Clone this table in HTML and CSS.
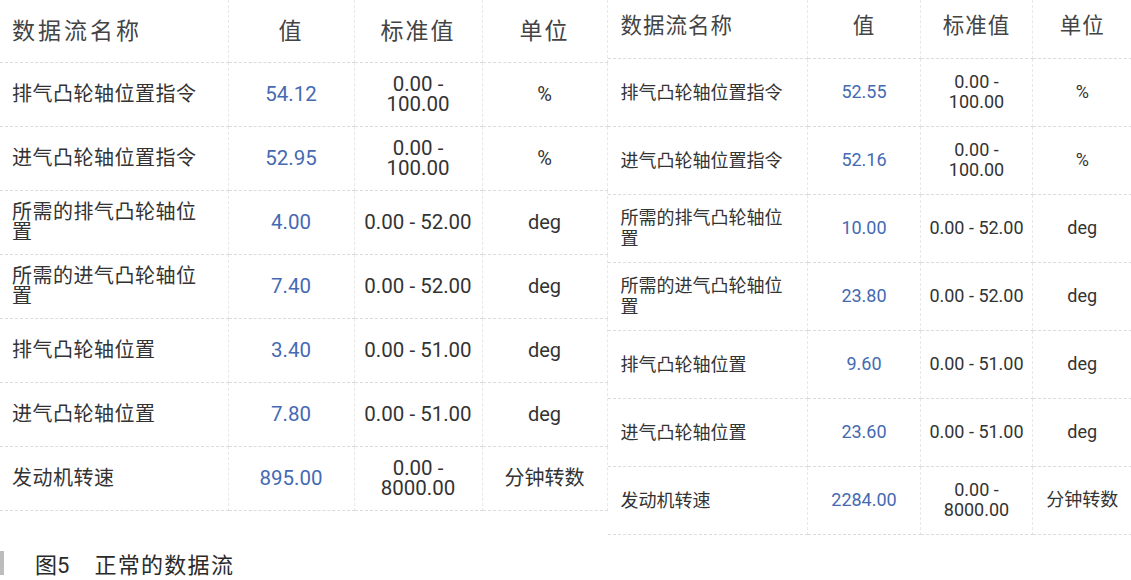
FILE: index.html
```html
<!DOCTYPE html>
<html lang="zh">
<head>
<meta charset="utf-8">
<link rel="stylesheet" href="styles.css">
</head>
<body>
<div class="figure">
  <div class="tables">
    <table class="dt dt-left">
      <colgroup><col class="c1"><col class="c2"><col class="c3"><col class="c4"></colgroup>
      <thead>
        <tr><th class="name">数据流名称</th><th>值</th><th>标准值</th><th>单位</th></tr>
      </thead>
      <tbody>
        <tr><td class="name">排气凸轮轴位置指令</td><td class="val">54.12</td><td class="rng">0.00 - 100.00</td><td class="unit">%</td></tr>
        <tr><td class="name">进气凸轮轴位置指令</td><td class="val">52.95</td><td class="rng">0.00 - 100.00</td><td class="unit">%</td></tr>
        <tr><td class="name">所需的排气凸轮轴位置</td><td class="val">4.00</td><td class="rng">0.00 - 52.00</td><td class="unit">deg</td></tr>
        <tr><td class="name">所需的进气凸轮轴位置</td><td class="val">7.40</td><td class="rng">0.00 - 52.00</td><td class="unit">deg</td></tr>
        <tr><td class="name">排气凸轮轴位置</td><td class="val">3.40</td><td class="rng">0.00 - 51.00</td><td class="unit">deg</td></tr>
        <tr><td class="name">进气凸轮轴位置</td><td class="val">7.80</td><td class="rng">0.00 - 51.00</td><td class="unit">deg</td></tr>
        <tr><td class="name">发动机转速</td><td class="val">895.00</td><td class="rng">0.00 - 8000.00</td><td class="unit">分钟转数</td></tr>
      </tbody>
    </table>
    <table class="dt dt-right">
      <colgroup><col class="c1"><col class="c2"><col class="c3"><col class="c4"></colgroup>
      <thead>
        <tr><th class="name">数据流名称</th><th>值</th><th>标准值</th><th>单位</th></tr>
      </thead>
      <tbody>
        <tr><td class="name">排气凸轮轴位置指令</td><td class="val">52.55</td><td class="rng">0.00 - 100.00</td><td class="unit">%</td></tr>
        <tr><td class="name">进气凸轮轴位置指令</td><td class="val">52.16</td><td class="rng">0.00 - 100.00</td><td class="unit">%</td></tr>
        <tr><td class="name">所需的排气凸轮轴位置</td><td class="val">10.00</td><td class="rng">0.00 - 52.00</td><td class="unit">deg</td></tr>
        <tr><td class="name">所需的进气凸轮轴位置</td><td class="val">23.80</td><td class="rng">0.00 - 52.00</td><td class="unit">deg</td></tr>
        <tr><td class="name">排气凸轮轴位置</td><td class="val">9.60</td><td class="rng">0.00 - 51.00</td><td class="unit">deg</td></tr>
        <tr><td class="name">进气凸轮轴位置</td><td class="val">23.60</td><td class="rng">0.00 - 51.00</td><td class="unit">deg</td></tr>
        <tr><td class="name">发动机转速</td><td class="val">2284.00</td><td class="rng">0.00 - 8000.00</td><td class="unit">分钟转数</td></tr>
      </tbody>
    </table>
  </div>
  <div class="caption"><span class="bar"></span><span class="cap-num">图5</span><span class="cap-text">正常的数据流</span></div>
</div>
</body>
</html>
```

FILE: styles.css
```css
html, body {
  margin: 0;
  padding: 0;
  background: #ffffff;
}

body {
  font-family: Roboto, "Noto Sans CJK SC", sans-serif;
  color: #333;
  width: 1131px;
  height: 580px;
  overflow: hidden;
}

.figure {
  display: flex;
  flex-direction: column;
}

.tables {
  display: flex;
  align-items: flex-start;
}

.dt {
  border-collapse: collapse;
  table-layout: fixed;
}

.dt th,
.dt td {
  border-bottom: 1px dashed #dcdcdc;
  border-right: 1px dashed #e8e8e8;
  text-align: center;
  vertical-align: middle;
  padding: 0 8px;
  box-sizing: border-box;
}

.dt th {
  font-weight: 400;
  color: #444;
}

.dt .name {
  text-align: left;
}

.dt .val {
  color: #456ab2;
}

/* left table */
.dt-left {
  width: 607px;
}
.dt-left .c1 { width: 228px; }
.dt-left .c2 { width: 126px; }
.dt-left .c3 { width: 128px; }
.dt-left .c4 { width: 125px; }

.dt-left th {
  height: 62px;
  font-size: 23px;
  letter-spacing: 2px;
  padding-bottom: 4px;
}
.dt-left th.name {
  padding-left: 12px;
  letter-spacing: 3px;
}
.dt-left tbody tr {
  height: 64px;
}
.dt-left td {
  font-size: 20.5px;
  line-height: 20px;
}
.dt-left td.val {
  font-size: 20.5px;
}
.dt-left td.name {
  font-size: 20px;
  letter-spacing: 0.5px;
  padding: 0 16px 0 12px;
}
.dt-left td.unit {
  font-size: 20px;
}

/* right table */
.dt-right {
  width: 524px;
}
.dt-right .c1 { width: 200px; }
.dt-right .c2 { width: 113px; }
.dt-right .c3 { width: 112px; }
.dt-right .c4 { width: 99px; }

.dt-right th {
  height: 58px;
  font-size: 21.5px;
  letter-spacing: 1px;
  padding-bottom: 10px;
}
.dt-right th.name {
  padding-left: 13px;
}
.dt-right tbody tr {
  height: 68px;
}
.dt-right td {
  font-size: 18px;
  line-height: 20px;
  padding: 0 6px;
}
.dt-right td.val {
  font-size: 18px;
}
.dt-right td.name {
  font-size: 18px;
  line-height: 21px;
  padding: 0 10px 0 13px;
}
.dt-right th:last-child,
.dt-right td:last-child {
  border-right: none;
}

/* caption */
.caption {
  display: flex;
  align-items: center;
  margin-top: 15px;
  height: 26px;
}
.bar {
  width: 4px;
  height: 24px;
  background: #bdbdbd;
}
.cap-num {
  margin-left: 31px;
  font-size: 22px;
  color: #2a2a2a;
}
.cap-text {
  margin-left: 25px;
  font-size: 22px;
  letter-spacing: 1.3px;
  color: #2a2a2a;
}
```
